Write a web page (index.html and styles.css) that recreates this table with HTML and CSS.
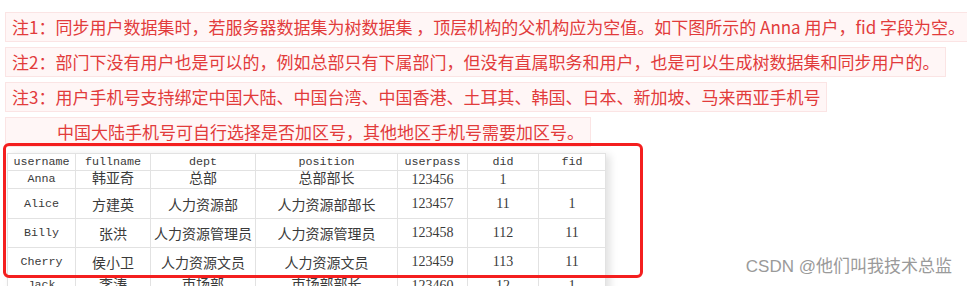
FILE: index.html
```html
<!DOCTYPE html>
<html lang="zh-CN">
<head>
<meta charset="utf-8">
<title>注意事项</title>
<link rel="stylesheet" href="styles.css">
</head>
<body>
<div class="page">
  <div class="notes">
    <div class="note">注1：同步用户数据集时，若服务器数据集为树数据集 ，顶层机构的父机构应为空值。如下图所示的 Anna 用户，fid 字段为空。</div>
    <div class="note">注2：部门下没有用户也是可以的，例如总部只有下属部门，但没有直属职务和用户，也是可以生成树数据集和同步用户的。</div>
    <div class="note">注3：用户手机号支持绑定中国大陆、中国台湾、中国香港、土耳其、韩国、日本、新加坡、马来西亚手机号</div>
    <div class="note indent">中国大陆手机号可自行选择是否加区号，其他地区手机号需要加区号。</div>
  </div>
  <table class="users">
    <colgroup>
      <col class="c1"><col class="c2"><col class="c3"><col class="c4"><col class="c5"><col class="c6"><col class="c7">
    </colgroup>
    <tr class="head"><td>username</td><td>fullname</td><td>dept</td><td>position</td><td>userpass</td><td>did</td><td>fid</td></tr>
    <tr class="short"><td>Anna</td><td>韩亚奇</td><td>总部</td><td>总部部长</td><td>123456</td><td>1</td><td></td></tr>
    <tr class="tall"><td>Alice</td><td>方建英</td><td>人力资源部</td><td>人力资源部部长</td><td>123457</td><td>11</td><td>1</td></tr>
    <tr class="mid"><td>Billy</td><td>张洪</td><td>人力资源管理员</td><td>人力资源管理员</td><td>123458</td><td>112</td><td>11</td></tr>
    <tr class="mid"><td>Cherry</td><td>侯小卫</td><td>人力资源文员</td><td>人力资源文员</td><td>123459</td><td>113</td><td>11</td></tr>
    <tr class="short"><td>Jack</td><td>李涛</td><td>市场部</td><td>市场部部长</td><td>123460</td><td>12</td><td>1</td></tr>
  </table>
  <div class="highlight"></div>
  <div class="watermark">CSDN @他们叫我技术总监</div>
</div>
</body>
</html>
```
FILE: styles.css
```css
html, body {
  margin: 0;
  padding: 0;
  background: #ffffff;
}
body {
  width: 967px;
  height: 286px;
  overflow: hidden;
}
.page {
  position: relative;
  height: 286px;
  padding: 12px 0 0 5px;
  box-sizing: border-box;
  font-family: "Noto Sans CJK SC", "Noto Sans", sans-serif;
}
.notes {
  display: flex;
  flex-direction: column;
  align-items: flex-start;
  gap: 5px;
}
.note {
  height: 30px;
  box-sizing: border-box;
  line-height: 28px;
  padding: 0 6px;
  font-size: 17px;
  color: #e23b3b;
  background: #fff6f6;
  border: 1px solid #fbe4e4;
  white-space: nowrap;
}
.note.indent {
  padding-left: 51px;
}
.users {
  margin: 6px 0 0 2px;
  border-collapse: collapse;
  table-layout: fixed;
  width: 598px;
  box-shadow: 4px 2px 8px rgba(0, 0, 0, 0.12);
  color: #3a3a3a;
  font-family: "Liberation Mono", "Noto Sans CJK SC", monospace;
  font-size: 11.7px;
}
.c1 { width: 68px; }
.c2 { width: 75px; }
.c3 { width: 105px; }
.c4 { width: 142px; }
.c5 { width: 70px; }
.c6 { width: 71px; }
.c7 { width: 67px; }
.users td {
  border: 1px solid #e2e2e2;
  text-align: center;
  padding: 0;
  white-space: nowrap;
  overflow: hidden;
}
.users tr:nth-child(n+2) td {
  font-size: 14px;
}
.users tr:nth-child(n+2) td:first-child {
  font-size: 11.7px;
}
.users tr.head td { height: 16px; line-height: 16px; }
.users tr.short td { height: 17px; line-height: 17px; }
.users tr.tall td { height: 29px; }
.users tr.mid td { height: 28px; }
.users td:nth-child(5),
.users td:nth-child(6),
.users td:nth-child(7) {
  font-family: "Liberation Serif", "Noto Sans CJK SC", serif;
}
.users tr.head td:nth-child(5),
.users tr.head td:nth-child(6),
.users tr.head td:nth-child(7) {
  font-family: "Liberation Mono", monospace;
}
.highlight {
  position: absolute;
  left: 3px;
  top: 143px;
  width: 640px;
  height: 135px;
  box-sizing: border-box;
  border: 3px solid #f41f1f;
  border-radius: 6px;
}
.watermark {
  position: absolute;
  right: 15px;
  top: 256px;
  font-size: 17px;
  line-height: 22px;
  color: #9a9a9a;
  font-family: "Liberation Sans", "Noto Sans CJK SC", sans-serif;
}
```
